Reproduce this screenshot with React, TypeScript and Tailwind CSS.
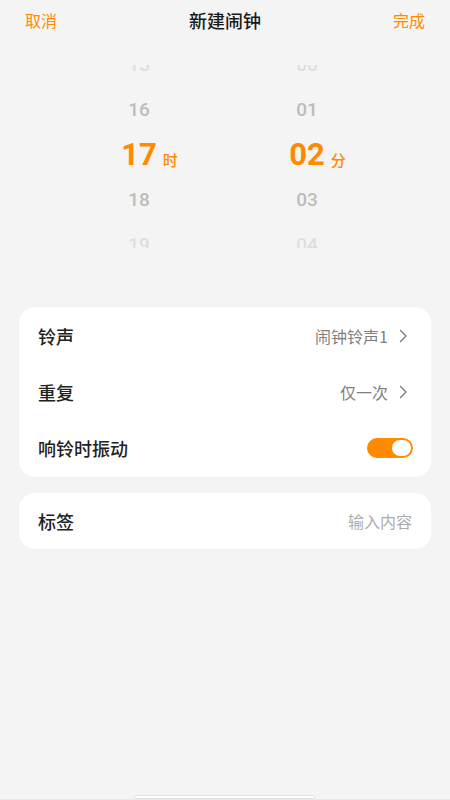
import React from "react";

function Chevron() {
  return (
    <svg width="8" height="14" viewBox="0 0 8 14" className="ml-[11px] mr-[5px]" fill="none">
      <path d="M1.5 1.5 L7 7 L1.5 12.5" stroke="#7a7a7a" strokeWidth="1.4" strokeLinecap="round" strokeLinejoin="round" />
    </svg>
  );
}

function PickerColumn({ items, selected, unit }: { items: string[]; selected: number; unit: string }) {
  return (
    <div className="flex flex-col items-center -mt-[23px]">
      {items.map((v, i) => {
        const dist = Math.abs(i - selected);
        if (dist === 0) {
          return (
            <div key={i} className="h-[45px] flex items-center justify-center">
              <span className="relative text-[31px] font-bold leading-none text-[#FF8A00]">
                {v}
                <span className="absolute left-full bottom-[1px] ml-[6px] text-[15px] font-medium whitespace-nowrap">{unit}</span>
              </span>
            </div>
          );
        }
        return (
          <div
            key={i}
            className={`h-[45px] flex items-center justify-center text-[19px] font-medium leading-none ${dist === 1 ? "text-[#bcbcbc]" : "text-[#dedede]"}`}
          >
            {v}
          </div>
        );
      })}
    </div>
  );
}

export default function App() {
  const font = { fontFamily: '"Noto Sans CJK SC", "Noto Sans", sans-serif' };
  const numFont = { fontFamily: 'Roboto, "Noto Sans CJK SC", sans-serif' };
  return (
    <div className="relative w-[450px] min-h-[800px] bg-[#F4F4F4]" style={font}>
      {/* Header */}
      <div className="h-10 flex items-center justify-between px-[25px]">
        <span className="text-[16px] text-[#FF8A00]">取消</span>
        <span className="text-[18px] font-medium text-[#1a1a1a]">新建闹钟</span>
        <span className="text-[16px] text-[#FF8A00]">完成</span>
      </div>

      {/* Picker */}
      <div className="mt-[25px] h-[183px] overflow-hidden ml-[55px] w-[336px] grid grid-cols-2" style={numFont}>
        <PickerColumn items={["15", "16", "17", "18", "19"]} selected={2} unit="时" />
        <PickerColumn items={["00", "01", "02", "03", "04"]} selected={2} unit="分" />
      </div>

      {/* Settings cards */}
      <div className="mt-[59px] px-[19px] flex flex-col gap-4">
        <div className="bg-white rounded-[16px] py-[1px]">
          <div className="h-14 flex items-center justify-between px-[19px]">
            <span className="text-[18px] font-medium text-[#222]">铃声</span>
            <div className="flex items-center">
              <span className="text-[16px] text-[#7f7f7f]">闹钟铃声1</span>
              <Chevron />
            </div>
          </div>
          <div className="h-14 flex items-center justify-between px-[19px]">
            <span className="text-[18px] font-medium text-[#222]">重复</span>
            <div className="flex items-center">
              <span className="text-[16px] text-[#7f7f7f]">仅一次</span>
              <Chevron />
            </div>
          </div>
          <div className="h-14 flex items-center justify-between pl-[19px] pr-[18px]">
            <span className="text-[18px] font-medium text-[#222]">响铃时振动</span>
            <div className="w-[46px] h-[20px] rounded-full bg-[#FF8A00] flex items-center justify-end pr-[1px]">
              <div className="w-[21px] h-[18px] rounded-full bg-white border border-[#FF8A00]" />
            </div>
          </div>
        </div>

        <div className="bg-white rounded-[16px]">
          <div className="h-14 flex items-center justify-between pl-[19px] pr-[19px]">
            <span className="text-[18px] font-medium text-[#222]">标签</span>
            <span className="text-[16px] text-[#ababab]">输入内容</span>
          </div>
        </div>
      </div>

      {/* Home indicator */}
      <div className="absolute left-0 right-0 bottom-0 h-[1px] bg-[#e8e8e8]" />
      <div className="absolute left-[134px] bottom-[1px] w-[181px] h-[4px] rounded-full bg-white border border-[#e2e2e2]" />
    </div>
  );
}
